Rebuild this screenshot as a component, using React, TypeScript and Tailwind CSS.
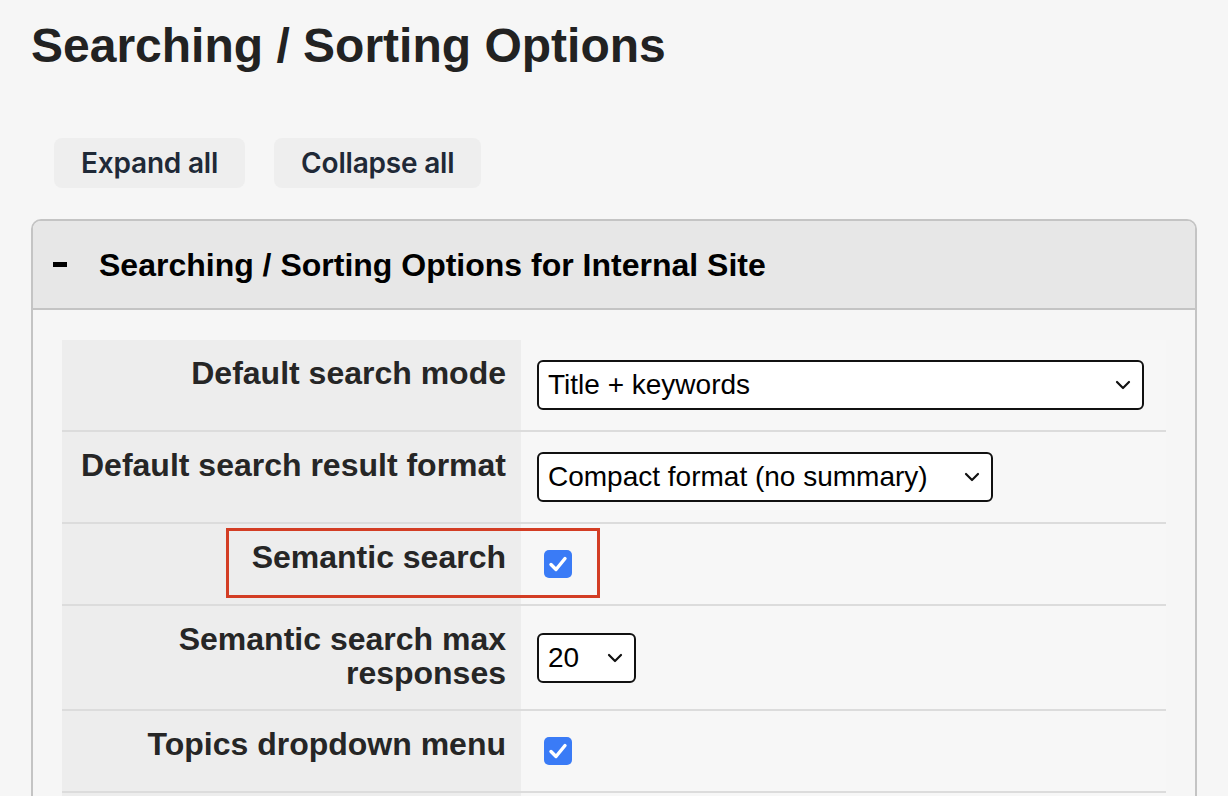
import React from "react";

const Chevron = () => (
  <svg width="16" height="10" viewBox="0 0 16 10" className="shrink-0">
    <path d="M2 2 L8 8 L14 2" fill="none" stroke="#111" strokeWidth="2.2" strokeLinecap="round" strokeLinejoin="round" />
  </svg>
);

const Check = () => (
  <span className="w-[28px] h-[28px] rounded-[5px] bg-[#3a7bf6] flex items-center justify-center">
    <svg width="22" height="20" viewBox="0 0 22 20">
      <path d="M4 10.5 L9 15.5 L18 4.5" fill="none" stroke="white" strokeWidth="3.4" strokeLinecap="round" strokeLinejoin="round" />
    </svg>
  </span>
);

function Select({ value, width }: { value: string; width: string }) {
  return (
    <div className={`${width} h-[50px] bg-white border-2 border-[#111] rounded-[6px] flex items-center justify-between pl-[9px] pr-[11px] text-[28px] text-black`}>
      <span>{value}</span>
      <Chevron />
    </div>
  );
}

function Row({ label, children, last }: { label: React.ReactNode; children: React.ReactNode; last?: boolean }) {
  return (
    <div className={`relative grid grid-cols-[459px_1fr] ${last ? "" : "border-b-2 border-[#dcdcdc]"}`}>
      <div className="bg-[#ededed] text-right pr-[15px] pl-[8px] pt-[16px] pb-[19px] text-[32px] leading-[34px] font-bold text-[#262626]">
        {label}
      </div>
      <div className="bg-[#f7f7f7] flex items-center pl-[16px] py-[20px]">{children}</div>
    </div>
  );
}

export default function App() {
  return (
    <div className="h-screen bg-[#f6f6f6] px-[31px] font-['Liberation_Sans',Arial,sans-serif] overflow-hidden">
      <h1 className="pt-[18px] text-[48px] leading-[56px] font-bold text-[#222]">Searching / Sorting Options</h1>

      {/* Expand / collapse */}
      <div className="flex gap-[29px] pl-[23px] mt-[64px]">
        <button className="h-[50px] px-[27px] rounded-[8px] bg-[#eeeeee] text-[28px] font-semibold text-[#1f2937] font-['Inter',sans-serif] tracking-[-0.2px]">
          Expand all
        </button>
        <button className="h-[50px] px-[27px] rounded-[8px] bg-[#eeeeee] text-[28px] font-semibold text-[#1f2937] font-['Inter',sans-serif] tracking-[-0.2px]">
          Collapse all
        </button>
      </div>

      {/* Panel */}
      <div className="mt-[31px] w-[1166px] border-2 border-[#c4c4c4] rounded-t-[10px] bg-[#f6f6f6]">
        <div className="h-[89px] bg-[#e7e7e7] border-b-2 border-[#c4c4c4] rounded-t-[8px] flex items-center pl-[20px]">
          <span className="w-[14px] h-[5px] bg-black mr-[32px]" />
          <span className="text-[32px] font-bold text-black">Searching / Sorting Options for Internal Site</span>
        </div>

        <div className="pt-[30px] pl-[29px] pr-[29px]">
          <Row label="Default search mode">
            <Select value="Title + keywords" width="w-[607px]" />
          </Row>
          <Row label="Default search result format">
            <Select value="Compact format (no summary)" width="w-[456px]" />
          </Row>
          <Row label="Semantic search">
            <div className="py-[6px] pl-[7px]">
              <Check />
            </div>
            <div className="absolute left-[164px] top-[4px] w-[374px] h-[70px] border-[3px] border-[#d33d24]" />
          </Row>
          <Row
            label={
              <>
                Semantic search max
                <br />
                responses
              </>
            }
          >
            <Select value="20" width="w-[99px]" />
          </Row>
          <Row label="Topics dropdown menu">
            <div className="py-[6px] pl-[7px]">
              <Check />
            </div>
          </Row>
          <Row label="" last>
            <div className="py-[6px] pl-[7px]">
              <Check />
            </div>
          </Row>
        </div>
      </div>
    </div>
  );
}
